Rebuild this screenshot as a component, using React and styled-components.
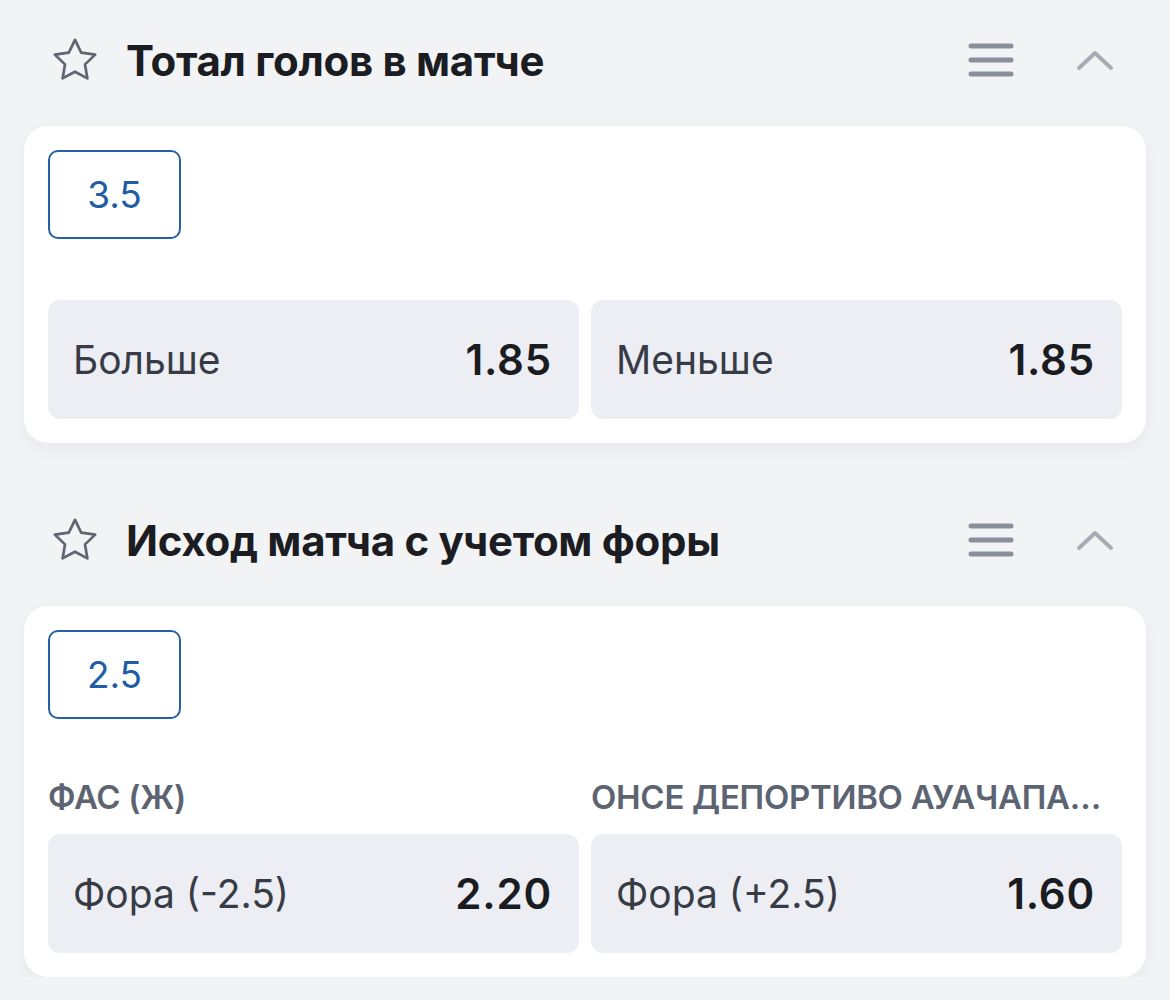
import styled, { createGlobalStyle } from 'styled-components'

const GlobalStyle = createGlobalStyle`
  body {
    margin: 0;
    background: #f2f3f5;
    font-family: Inter, "Noto Sans", sans-serif;
  }
`

const markets = [
  {
    title: 'Тотал голов в матче',
    line: '3.5',
    outcomes: [
      { label: 'Больше', odds: '1.85' },
      { label: 'Меньше', odds: '1.85' },
    ],
  },
  {
    title: 'Исход матча с учетом форы',
    line: '2.5',
    outcomes: [
      { team: 'ФАС (Ж)', label: 'Фора (-2.5)', odds: '2.20' },
      { team: 'ОНСЕ ДЕПОРТИВО АУАЧАПАН (Ж)', label: 'Фора (+2.5)', odds: '1.60' },
    ],
  },
]

const StarIcon = () => (
  <svg width="48" height="46" viewBox="0 0 24 23" fill="none" stroke="#5f6672" strokeWidth="1.35" strokeLinejoin="round">
    <path d="M12 1.4l3.1 6.4 7 1-5.1 4.9 1.2 7L12 17.4l-6.2 3.3 1.2-7L1.9 8.8l7-1z" />
  </svg>
)

const MenuIcon = () => (
  <svg width="46" height="36" viewBox="0 0 46 36" fill="none" stroke="#8a909b" strokeWidth="5" strokeLinecap="round">
    <path d="M3 4h40M3 18h40M3 32h40" />
  </svg>
)

const ChevronIcon = () => (
  <svg width="38" height="22" viewBox="0 0 38 22" fill="none" stroke="#a7acb4" strokeWidth="4" strokeLinecap="round" strokeLinejoin="round">
    <path d="M3 19L19 4l16 15" />
  </svg>
)

const Page = styled.div`
  padding: 20px 24px 0;
  display: flex;
  flex-direction: column;
  gap: 57px;
`

const Section = styled.section`
  display: flex;
  flex-direction: column;
  gap: 26px;
`

const Header = styled.div`
  height: 80px;
  display: flex;
  align-items: center;
  padding-left: 27px;
`

const Title = styled.h2`
  flex: 1;
  margin: 0 0 0 27px;
  font-size: 42px;
  font-weight: 700;
  color: #1b1d22;
  letter-spacing: -0.3px;
`

const Actions = styled.div`
  display: flex;
  align-items: center;
  gap: 62px;
  padding-right: 32px;
`

const Card = styled.div`
  background: #fff;
  border-radius: 24px;
  padding: 24px;
  box-shadow: 0 6px 16px rgba(30, 40, 60, 0.05);
`

const Chip = styled.div`
  width: 129px;
  height: 85px;
  border: 2px solid #2461a6;
  border-radius: 10px;
  display: flex;
  align-items: center;
  justify-content: center;
  font-size: 37px;
  color: #1f5ea6;
  margin-bottom: 61px;
`

const Outcomes = styled.div`
  display: grid;
  grid-template-columns: 1fr 1fr;
  column-gap: 12px;
`

const Outcome = styled.div`
  display: flex;
  flex-direction: column;
  gap: 17px;
  min-width: 0;
`

const Team = styled.div`
  font-size: 33px;
  font-weight: 600;
  color: #5c6472;
  line-height: 40px;
  margin-top: -3px;
  letter-spacing: -0.3px;
  white-space: nowrap;
  overflow: hidden;
  text-overflow: ellipsis;
  padding-right: 8px;
`

const OddsButton = styled.div`
  height: 119px;
  background: #eceef3;
  border-radius: 12px;
  display: flex;
  align-items: center;
  justify-content: space-between;
  padding: 0 27px 0 25px;
`

const Label = styled.span`
  font-size: 39px;
  color: #373b45;
`

const Odds = styled.span`
  font-size: 42px;
  font-weight: 600;
  color: #1a1c21;
  letter-spacing: 0.8px;
`

const Market = ({ title, line, outcomes }) => (
  <Section>
    <Header>
      <StarIcon />
      <Title>{title}</Title>
      <Actions>
        <MenuIcon />
        <ChevronIcon />
      </Actions>
    </Header>
    <Card>
      <Chip>{line}</Chip>
      <Outcomes>
        {outcomes.map((o) => (
          <Outcome key={o.label}>
            {o.team && <Team>{o.team}</Team>}
            <OddsButton>
              <Label>{o.label}</Label>
              <Odds>{o.odds}</Odds>
            </OddsButton>
          </Outcome>
        ))}
      </Outcomes>
    </Card>
  </Section>
)

export default function App() {
  return (
    <>
      <GlobalStyle />
      <Page>
        {markets.map((m) => (
          <Market key={m.title} {...m} />
        ))}
      </Page>
    </>
  )
}
